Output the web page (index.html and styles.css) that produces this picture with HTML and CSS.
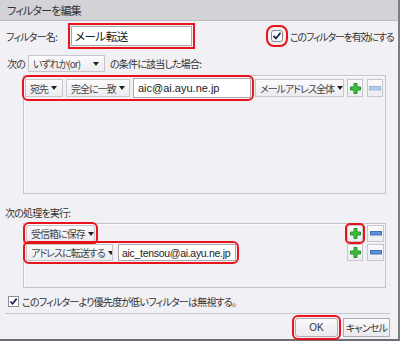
FILE: index.html
```html
<!DOCTYPE html>
<html>
	<head>
		<meta charset="utf-8">
		<title>フィルターを編集</title>
		<link rel="stylesheet" href="styles.css">
	</head>
	<body>
		<div class="dialog">
			<div class="title">フィルターを編集</div>

			<div class="name-row">
				<span class="name-lbl">フィルター名:</span>
				<span class="input name-input hl">メール転送</span>
				<span class="check enable-check hl">
					<svg width="10" height="10" viewBox="0 0 10 10"><path d="M1.5 5 L4 7.5 L8.5 1.8" stroke="#1b2452" stroke-width="1.8" fill="none"/></svg>
				</span>
				<span class="enable-lbl">このフィルターを有効にする</span>
			</div>

			<div class="match-row">
				<span class="pre">次の</span>
				<span class="sel match-sel">いずれか(or)</span>
				<span class="post">の条件に該当した場合:</span>
			</div>

			<div class="box cond-box">
				<div class="row cond-row">
					<span class="group hl">
						<span class="sel w-to">宛先</span>
						<span class="sel w-exact">完全に一致</span>
						<span class="input mail">aic@ai.ayu.ne.jp</span>
					</span>
					<span class="sel w-whole">メールアドレス全体</span>
					<span class="btn-icon">
						<svg width="11" height="11" viewBox="0 0 11 11"><path d="M4 0.5h3v3.5h3.5v3h-3.5v3.5h-3v-3.5h-3.5v-3h3.5z" fill="#3fbf3a" stroke="#23912a"/></svg>
					</span>
					<span class="btn-icon">
						<svg width="12" height="5" viewBox="0 0 12 5"><rect x="0.5" y="0.5" width="11" height="3.5" fill="#b3cbec" stroke="#98b5df"/></svg>
					</span>
				</div>
			</div>

			<div class="section-lbl">次の処理を実行:</div>

			<div class="box act-box">
				<div class="row">
					<span class="sel w-inbox hl">受信箱に保存</span>
					<span class="btn-icon push hl plus-hl">
						<svg width="11" height="11" viewBox="0 0 11 11"><path d="M4 0.5h3v3.5h3.5v3h-3.5v3.5h-3v-3.5h-3.5v-3h3.5z" fill="#3fbf3a" stroke="#23912a"/></svg>
					</span>
					<span class="btn-icon minus">
						<svg width="12" height="5" viewBox="0 0 12 5"><rect x="0.5" y="0.5" width="11" height="3.5" fill="#5d92d8" stroke="#3f72b8"/></svg>
					</span>
				</div>
				<div class="row">
					<span class="group hl">
						<span class="sel w-forward">アドレスに転送する</span>
						<span class="input mail fwd">aic_tensou@ai.ayu.ne.jp</span>
					</span>
					<span class="btn-icon push">
						<svg width="11" height="11" viewBox="0 0 11 11"><path d="M4 0.5h3v3.5h3.5v3h-3.5v3.5h-3v-3.5h-3.5v-3h3.5z" fill="#3fbf3a" stroke="#23912a"/></svg>
					</span>
					<span class="btn-icon minus">
						<svg width="12" height="5" viewBox="0 0 12 5"><rect x="0.5" y="0.5" width="11" height="3.5" fill="#5d92d8" stroke="#3f72b8"/></svg>
					</span>
				</div>
			</div>

			<div class="ignore-row">
				<span class="check small">
					<svg width="9" height="9" viewBox="0 0 10 10"><path d="M1.5 5 L4 7.5 L8.5 1.8" stroke="#1b2452" stroke-width="1.9" fill="none"/></svg>
				</span>
				<span class="ignore-lbl">このフィルターより優先度が低いフィルターは無視する。</span>
			</div>

			<div class="footer">
				<span class="btn ok hl">OK</span>
				<span class="btn cancel">キャンセル</span>
			</div>
		</div>
	</body>
</html>
```

FILE: styles.css
```css
body {
	margin: 0;
	background: #fff;
}
.dialog {
	width: 400px;
	height: 341px;
	box-sizing: border-box;
	border-right: 2px solid #7c7c82;
	border-bottom: 2px solid #6c6c72;
	background: #f0f0f5;
	font-family: "Noto Sans CJK JP", sans-serif;
	font-feature-settings: "palt";
	font-size: 10px;
	letter-spacing: -0.8px;
	color: #333;
	white-space: nowrap;
	display: flex;
	flex-direction: column;
}
.dialog span {
	flex-shrink: 0;
}
.title {
	height: 20px;
	line-height: 20px;
	padding-left: 7px;
	background: #d2d2d7;
	border-bottom: 1px solid #bcbcc2;
	font-size: 11px;
	color: #333;
}
/* red marks drawn over the controls */
.hl {
	outline: 2px solid #e8141b;
	outline-offset: 1px;
	border-radius: 3px;
}

.name-row {
	display: flex;
	align-items: center;
	height: 20px;
	margin-top: 5px;
	padding-left: 6px;
}
.name-lbl {
	width: 65px;
}
.input {
	box-sizing: border-box;
	height: 20px;
	border: 1px solid #a9a9b0;
	background: #fff;
	padding-left: 3px;
	display: flex;
	align-items: center;
	color: #222;
	overflow: hidden;
}
.name-input {
	width: 121px;
	font-size: 11.5px;
	letter-spacing: -0.5px;
	border-radius: 0;
}
.check {
	box-sizing: border-box;
	width: 12px;
	height: 12px;
	border: 1px solid #8c8c92;
	background: #fff;
	display: flex;
	align-items: center;
	justify-content: center;
}
.enable-check {
	margin-left: 79px;
	outline-offset: 3px;
}
.enable-lbl {
	margin-left: 7px;
	letter-spacing: -1.2px;
}

.match-row {
	display: flex;
	align-items: center;
	height: 17px;
	margin-top: 9px;
	padding-left: 7px;
}
.pre {
	width: 21px;
}
.post {
	margin-left: 5px;
}
.sel {
	box-sizing: border-box;
	height: 18px;
	border: 1px solid #c6c6cc;
	background: linear-gradient(#fbfbfd, #ececf1);
	display: flex;
	align-items: center;
	justify-content: space-between;
	padding: 0 5px 0 4px;
	color: #444;
	letter-spacing: -1px;
	overflow: hidden;
}
.sel::after {
	content: "";
	flex-shrink: 0;
	margin-left: 3px;
	border-left: 3.5px solid transparent;
	border-right: 3.5px solid transparent;
	border-top: 4px solid #222;
}
.match-sel {
	width: 77px;
	height: 17px;
}

.box {
	box-sizing: border-box;
	margin-left: 23px;
	width: 363px;
	border: 1px solid #c3c3c9;
	box-shadow: inset 1px 1px 0 #fafafc;
}
.row {
	display: flex;
	align-items: center;
	gap: 3px;
}
.group {
	display: flex;
	align-items: center;
	gap: 3px;
}
.cond-box {
	height: 119px;
	margin-top: 3px;
	padding: 2px 0 0 1px;
}
.cond-row {
	height: 20px;
}
.w-to {
	width: 38px;
}
.w-exact {
	width: 64px;
}
.mail {
	width: 118px;
	font-family: "Liberation Sans", sans-serif;
	font-size: 11px;
	letter-spacing: 0;
	padding-left: 4px;
}
.w-whole {
	width: 89px;
	margin-left: 1px;
}
.btn-icon {
	box-sizing: border-box;
	width: 16px;
	height: 18px;
	border: 1px solid #c6c6cc;
	background: linear-gradient(#fbfbfd, #ececf1);
	display: flex;
	align-items: center;
	justify-content: center;
}
.btn-icon + .btn-icon {
	margin-left: 1px;
}

.section-lbl {
	margin: 12px 0 0 5px;
	height: 14px;
	line-height: 14px;
}
.act-box {
	height: 65px;
	margin-top: 3px;
	padding: 1px 1px 0 2px;
	display: flex;
	flex-direction: column;
	gap: 2px;
}
.act-box .row {
	height: 17px;
}
.act-box .sel,
.act-box .input,
.act-box .btn-icon {
	height: 17px;
}
.w-inbox {
	width: 69px;
}
.w-forward {
	width: 87px;
}
.fwd {
	margin-left: 2px;
	padding-left: 3px;
	font-size: 10.5px;
	letter-spacing: -0.3px;
}
.push {
	margin-left: auto;
}
.plus-hl {
	outline-offset: 0;
}
.minus {
	width: 17px;
}

.ignore-row {
	display: flex;
	align-items: center;
	height: 14px;
	margin-top: 6px;
	padding-left: 8px;
}
.check.small {
	width: 11px;
	height: 11px;
}
.ignore-lbl {
	margin-left: 3px;
}

.footer {
	margin: 5px 8px 0 5px;
	border-top: 1px solid #c8c8ce;
	padding-top: 4px;
	display: flex;
	justify-content: flex-end;
	gap: 5px;
}
.btn {
	box-sizing: border-box;
	height: 19px;
	border: 1px solid #adadb3;
	background: linear-gradient(#fbfbfd, #e9e9ee);
	display: flex;
	align-items: center;
	justify-content: center;
	color: #333;
}
.ok {
	width: 43px;
	font-family: "Liberation Sans", sans-serif;
	letter-spacing: 0;
}
.cancel {
	width: 47px;
}
```
